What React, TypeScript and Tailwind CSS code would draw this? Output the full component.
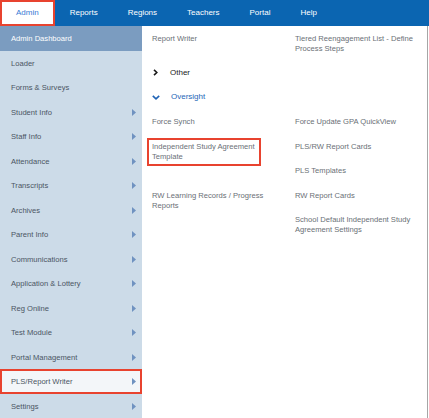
import React from "react";

const NAV = ["Admin", "Reports", "Regions", "Teachers", "Portal", "Help"];

const SIDE = [
  { label: "Loader", arrow: false },
  { label: "Forms & Surveys", arrow: false },
  { label: "Student Info", arrow: true },
  { label: "Staff Info", arrow: true },
  { label: "Attendance", arrow: true },
  { label: "Transcripts", arrow: true },
  { label: "Archives", arrow: true },
  { label: "Parent Info", arrow: true },
  { label: "Communications", arrow: true },
  { label: "Application & Lottery", arrow: true },
  { label: "Reg Online", arrow: true },
  { label: "Test Module", arrow: true },
  { label: "Portal Management", arrow: true },
  { label: "PLS/Report Writer", arrow: true, active: true },
  { label: "Settings", arrow: true },
];

const LEFT_COL = ["Force Synch", "Independent Study Agreement Template", "", "RW Learning Records / Progress Reports", ""];
const RIGHT_COL = [
  "Force Update GPA QuickView",
  "PLS/RW Report Cards",
  "PLS Templates",
  "RW Report Cards",
  "School Default Independent Study Agreement Settings",
];

const Arrow: React.FC = () => (
  <svg width="4" height="7" viewBox="0 0 4 7" className="shrink-0">
    <polygon points="0,0 4,3.5 0,7" fill="#6f92c0" />
  </svg>
);

const Cell: React.FC<{ text: string; boxed?: boolean }> = ({ text, boxed }) => (
  <div className="h-[24.5px] relative">
    {text && <div className="pt-[8px] leading-[10px] text-[#6a6f76] w-[132px]">{text}</div>}
    {boxed && <div className="absolute left-[-5px] top-[4px] w-[114px] h-[28px] border-2 border-[#e8432f]" />}
  </div>
);

const App: React.FC = () => {
  return (
    <div
      className="w-[429px] h-[418px] overflow-hidden bg-white text-[7.6px]"
      style={{ fontFamily: '"Liberation Sans", Arial, sans-serif' }}
    >
      <div className="flex h-[26px] bg-[#0b65b1] text-[8px]">
        {NAV.map((n, i) =>
          i === 0 ? (
            <div key={n} className="flex items-center px-[14px] bg-white border-2 border-[#e8432f] text-[#3a7bd5]">
              {n}
            </div>
          ) : (
            <div key={n} className="flex items-center px-[15px] text-white">
              {n}
            </div>
          )
        )}
      </div>

      <div className="flex h-[392px]">
        <div className="w-[143px] bg-[#ccdbe8] text-[#4b5563]">
          <div className="h-[24.5px] flex items-center pl-[11px] pt-[1px] bg-[#7b9cc0] text-white">Admin Dashboard</div>
          {SIDE.map((s) =>
            s.active ? (
              <div
                key={s.label}
                className="h-[24.5px] flex items-center justify-between pl-[9px] pr-[4px] pt-[1px] bg-[#f3f6f9] border-2 border-[#e8432f]"
              >
                <span>{s.label}</span>
                <Arrow />
              </div>
            ) : (
              <div key={s.label} className="h-[24.5px] flex items-center justify-between pl-[11px] pr-[6px] pt-[1px]">
                <span>{s.label}</span>
                {s.arrow && <Arrow />}
              </div>
            )
          )}
        </div>

        <div className="flex-1 pl-[10px] border-r border-[#a6a6a6] mr-[1px]">
          <div className="grid grid-cols-[143px_1fr] h-[34px]">
            <div className="pt-[8px] leading-[10px] text-[#6a6f76]">Report Writer</div>
            <div className="pt-[8px] leading-[10px] text-[#6a6f76] w-[132px]">
              Tiered Reengagement List - Define Process Steps
            </div>
          </div>

          <div className="h-[24.5px] flex items-center gap-[12px] pt-[1px]">
            <svg width="5" height="7" viewBox="0 0 5 7" className="ml-[1px]">
              <polyline points="1,0.8 3.8,3.5 1,6.2" fill="none" stroke="#1a1a1a" strokeWidth="1.6" />
            </svg>
            <span className="text-[#222] text-[8px]">Other</span>
          </div>

          <div className="h-[24.5px] flex items-center gap-[11px] pt-[1px]">
            <svg width="8" height="5" viewBox="0 0 8 5">
              <polyline points="0.8,0.8 4,3.8 7.2,0.8" fill="none" stroke="#1f63b5" strokeWidth="1.6" />
            </svg>
            <span className="text-[#2566b7] text-[8px]">Oversight</span>
          </div>

          <div className="grid grid-cols-[143px_1fr]">
            <div>
              {LEFT_COL.map((t, i) => (
                <Cell key={i} text={t} boxed={i === 1} />
              ))}
            </div>
            <div>
              {RIGHT_COL.map((t, i) => (
                <Cell key={i} text={t} />
              ))}
            </div>
          </div>
        </div>
      </div>
    </div>
  );
};

export default App;
